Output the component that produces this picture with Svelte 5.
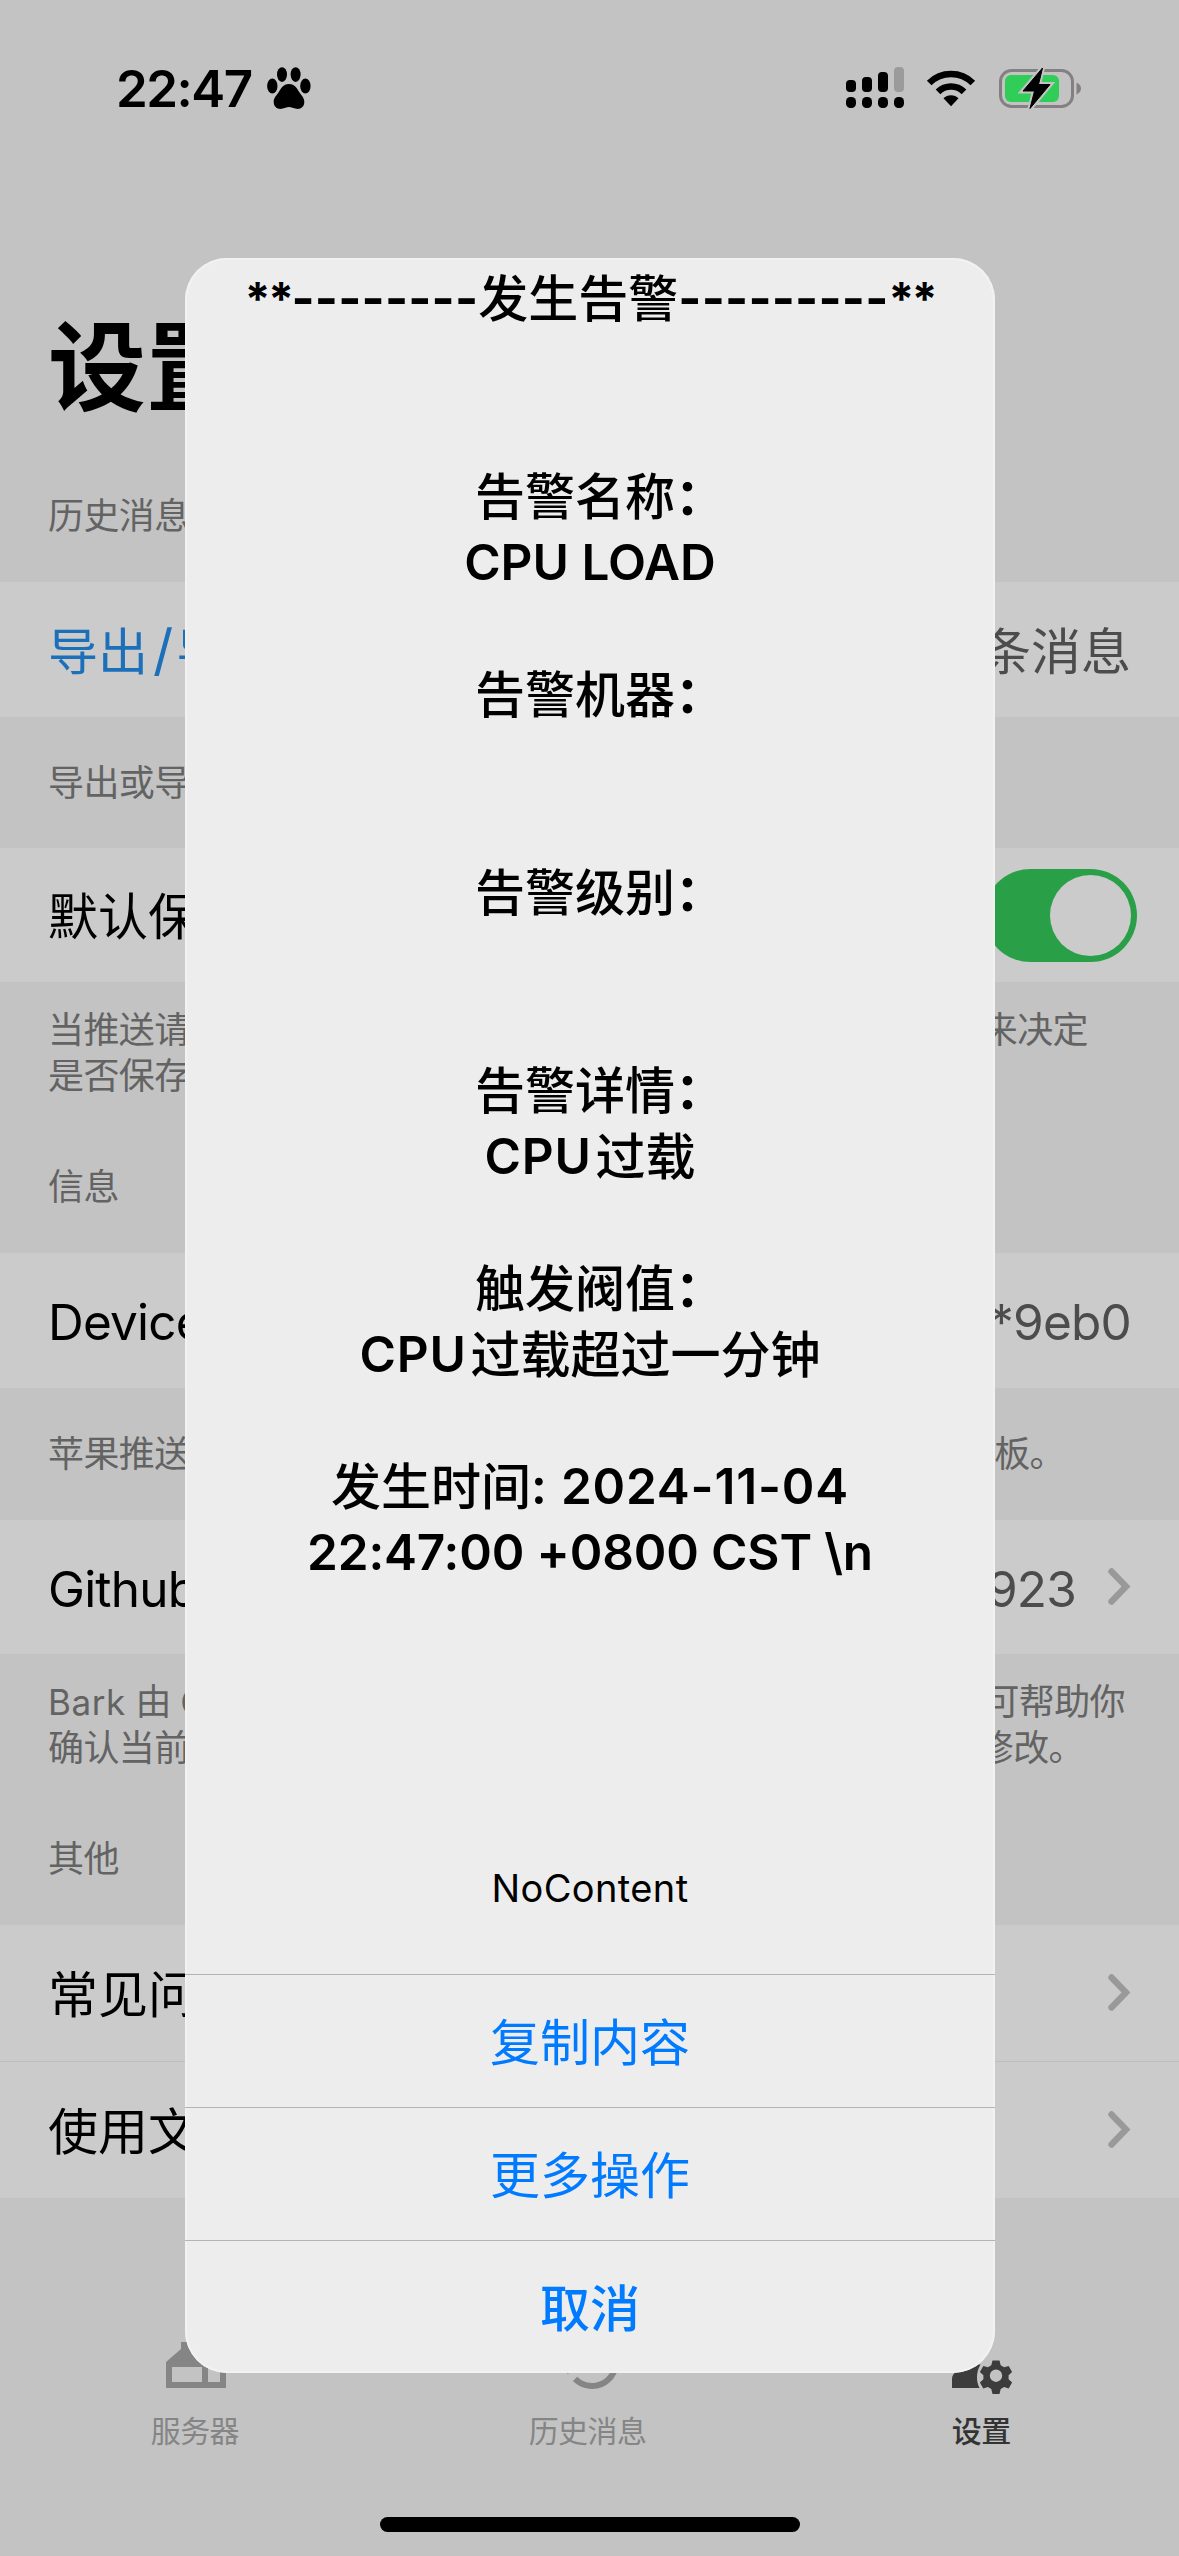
<script>
  const lines = [
    [['**', 's'], ['--------', 'd'], ['发生告警', 'han'], ['---------', 'd'], ['**', 's']],
    [],
    [],
    [['告警名称', 'han'], ['：', 'k']],
    [['CPU LOAD', 'l']],
    [],
    [['告警机器', 'han'], ['：', 'k']],
    [],
    [],
    [['告警级别', 'han'], ['：', 'k']],
    [],
    [],
    [['告警详情', 'han'], ['：', 'k']],
    [['CPU', 'l g'], ['过载', 'han']],
    [],
    [['触发阀值', 'han'], ['：', 'k']],
    [['CPU', 'l g'], ['过载超过一分钟', 'han']],
    [],
    [['发生时间', 'han'], [': 2024-11-04', 'l w']],
    [['22:47:00 +0800 CST \\n', 'l t']]
  ];
  const actions = ['复制内容', '更多操作', '取消'];
</script>

{#snippet chevron()}
  <svg class="chev" viewBox="0 0 24 40"><path d="M4.5 4.500 19 19.500 4.500 34.500" /></svg>
{/snippet}

<div class="screen">
  <header class="status">
    <span class="time">22:47</span>
    <svg class="paw" viewBox="0 0 44 42">
      <ellipse cx="15" cy="7.6" rx="5" ry="7.4" /><ellipse cx="28.6" cy="7.6" rx="5" ry="7.4" />
      <ellipse cx="5.3" cy="19" rx="5.2" ry="7.4" /><ellipse cx="38.4" cy="19" rx="5.2" ry="7.4" />
      <path d="M22 17c6 0 8 4.500 10.500 8.500 2.500 3.500 4.800 5.500 4.800 9.500 0 5-4 7.500-8 6.800-3-.6-4.800-1.800-7.300-1.800s-4.300 1.200-7.300 1.800c-4 .7-8-1.800-8-6.800 0-4 2.300-6 4.800-9.500C14 21.500 16 17 22 17z" />
    </svg>
    <span class="fill"></span>
    <svg class="signal" viewBox="0 0 58 42">
      <rect x="0" y="13" width="10" height="12" rx="4" /><rect x="16" y="10" width="10" height="15" rx="4" />
      <rect x="32" y="5" width="10" height="20" rx="4" /><rect x="48" y="0" width="10" height="25" rx="4" fill="#9b9b9b" />
      <rect x="0" y="30" width="10" height="11" rx="4.500" /><rect x="16" y="30" width="10" height="11" rx="4.500" />
      <rect x="32" y="30" width="10" height="11" rx="4.500" /><rect x="48" y="30" width="10" height="11" rx="4.500" />
    </svg>
    <svg class="wifi" viewBox="0 0 50 38">
      <path d="M3.200 14a31 31 0 0 1 43.600 0M12 22.800a18.600 18.600 0 0 1 26 0" fill="none" stroke="#000" stroke-width="6.600" />
      <path d="M17.500 29.300a10.600 10.600 0 0 1 15 0L25 37.200z" />
    </svg>
    <svg class="battery" viewBox="0 0 84 44">
      <rect x="1.500" y="4.500" width="72" height="36" rx="11" fill="none" stroke="#848082" stroke-width="3" />
      <rect x="6" y="9" width="54" height="27" rx="6" fill="#30cd58" />
      <path d="M77.500 16.500c3 1.300 4.500 3.500 4.500 6s-1.500 4.700-4.500 6z" fill="#848082" />
      <path d="M43.500 2 24 25h11.500L31 42.500 51 18.500H39.500z" stroke="#c3c3c3" stroke-width="5" />
      <path d="M43.500 2 24 25h11.500L31 42.500 51 18.500H39.500z" stroke="#000" stroke-width="1" />
    </svg>
  </header>

  <h1>设置</h1>

  <main>
    <div class="label">历史消息</div>
    <div class="row r1"><span class="link">导出<span class="slash">/</span>导入</span><span class="value">条消息</span></div>
    <div class="note one"><span>导出或导入</span></div>
    <div class="row r2"><span>默认保存</span><span class="switch"><i></i></span></div>
    <div class="note two">
      <div class="cut save"><span>当推送请求</span><span>来决定</span></div>
      <div>是否保存消</div>
    </div>
    <div class="label">信息</div>
    <div class="row r1 lat"><span>Device Token</span><span class="value">**9eb0</span></div>
    <div class="note"><div class="cut push"><span>苹果推送设</span><span>板。</span></div></div>
    <div class="row r2 lat"><span>Github</span><span class="value">f923</span>{@render chevron()}</div>
    <div class="note two">
      <div class="cut build"><span><b>Bark</b> 由 <b>G</b></span><span>可帮助你</span></div>
      <div class="cut verify"><span>确认当前版</span><span>修改。</span></div>
    </div>
    <div class="label">其他</div>
    <div class="row r3"><span>常见问题</span>{@render chevron()}</div>
    <div class="row r3 sep"><span>使用文档</span>{@render chevron()}</div>
  </main>

  <nav>
    <div class="tab">
      <svg class="home" viewBox="0 0 72 72">
        <path fill-rule="evenodd" d="M6 62V36L21 23V16h6l6 6V12h33v50zm6-6h30V41H12zm36 0h12V41H48z" />
      </svg>
      <span>服务器</span>
    </div>
    <div class="tab">
      <svg class="hist" viewBox="0 0 24 24"><path d="M13 3c-4.970 0-9 4.030-9 9H1l3.890 3.890.07.14L9 12H6c0-3.870 3.130-7 7-7s7 3.130 7 7-3.130 7-7 7c-1.930 0-3.680-.79-4.940-2.060l-1.420 1.420C8.270 19.990 10.510 21 13 21c4.970 0 9-4.030 9-9s-4.030-9-9-9z" /></svg>
      <span>历史消息</span>
    </div>
    <div class="tab on">
      <svg class="user" viewBox="0 0 72 72">
        <circle cx="28" cy="20" r="12" />
        <path d="M6 62V53c0-3 1.500-6 5-8 6-4 13-6.500 21-6.500h2.500C30 46 30 55 33.500 62z" />
        <path fill-rule="evenodd" d="M46.500 34.500h7l1.200 4.800 3.400 2 4.600-1.400 3.400 6-3.500 3.300v4l3.500 3.300-3.400 6-4.600-1.400-3.400 2-1.200 4.800h-7l-1.200-4.800-3.400-2-4.600 1.400-3.400-6 3.500-3.300v-4l-3.500-3.300 3.400-6 4.600 1.400 3.400-2zM50 43.500a6.200 6.200 0 1 0 0 12.400 6.200 6.200 0 0 0 0-12.400z" />
      </svg>
      <span>设置</span>
    </div>
  </nav>
  <div class="indicator"></div>

  <div class="alert" role="alertdialog" aria-label="告警">
    <div class="body">
      <div class="title">
        {#each lines as line}
          <div class="line">{#each line as [text, kind]}<span class={kind}>{text}</span>{/each}</div>
        {/each}
      </div>
      <div class="message">NoContent</div>
    </div>
    {#each actions as action, i}
      <button class:bold={i === 2}>{action}</button>
    {/each}
  </div>
</div>

<style>
  :global(body) { margin: 0; background: #c3c3c3; }
  .screen {
    position: relative; width: 1179px; height: 2556px; overflow: hidden;
    display: flex; flex-direction: column; box-sizing: border-box;
    background: #c3c3c3; color: #000; font-family: Inter, "Noto Sans CJK SC", sans-serif;
  }
  .status { display: flex; align-items: center; height: 176px; flex: none; padding: 0 98px 0 116px; box-sizing: border-box; }
  .time { font-size: 51px; font-weight: 600; letter-spacing: -1.5px; width: 151px; white-space: nowrap; }
  .paw { width: 44px; height: 42px; }
  .fill { flex: 1; }
  .signal { width: 58px; height: 42px; margin-right: 22px; }
  .wifi { width: 50px; height: 38px; margin-right: 23px; }
  .battery { width: 84px; height: 44px; margin-right: -2px; }
  h1 {
    margin: 115px 0 5px; padding-left: 48px; height: 154px; line-height: 154px; flex: none;
    font-size: 98px; font-weight: 700;
  }
  .label, .note { padding: 0 48px; font-size: 36px; letter-spacing: -0.6px; color: #636363; white-space: nowrap; }
  .label { height: 132px; line-height: 133px; }
  .note { height: 132px; line-height: 133px; }
  .note.one { height: 131px; line-height: 133px; }
  .note.two { height: 114px; padding-top: 25px; line-height: 46px; }
  .note b { font-weight: 400; font-size: 35px; letter-spacing: 0.6px; }
  .cut { display: flex; justify-content: space-between; }
  .save { margin-right: 43px; }
  .push { margin-right: 66px; }
  .build { margin-right: 6px; }
  .verify { margin-right: 47px; }
  .row {
    display: flex; align-items: center; padding: 0 48px; box-sizing: border-box;
    background: #cbcbcb; font-size: 50px; white-space: nowrap;
  }
  .row > span:not(.switch) { margin-top: -4px; }
  .row.lat > span { margin-top: 3px; }
  .r1 { height: 135px; }
  .r2 { height: 134px; }
  .r3 { height: 136px; }
  .sep { height: 137px; border-top: 1px solid #bdbdbd; }
  .lat { font-size: 49.5px; letter-spacing: -0.8px; }
  .row > span:first-child { flex: 1; }
  .value { color: #4c4c4c; }
  .link { color: #1c6fb9; }
  .slash { margin: 0 3px 0 5px; font-size: 56px; line-height: 50px; }
  .chev { width: 24px; height: 40px; margin: 0 0 0 31px; }
  .chev path { fill: none; stroke: #999; stroke-width: 6.4; stroke-linecap: round; stroke-linejoin: miter; }
  .switch {
    width: 153px; height: 93px; border-radius: 47px; background: #29a048; margin-right: -6px;
    display: flex; justify-content: flex-end; align-items: center; padding-right: 6px; box-sizing: border-box;
  }
  .switch i { width: 81px; height: 81px; border-radius: 50%; background: #cbcbcb; }
  nav { display: flex; margin-top: 128px; margin-right: 1px; }
  .tab { flex: 1; display: flex; flex-direction: column; align-items: center; color: #858585; font-size: 30px; letter-spacing: -0.6px; }
  .tab span { line-height: 44px; margin-top: 11px; margin-right: 3px; }
  .tab svg { fill: #858585; height: 72px; width: 72px; }
  .tab.on { color: #333; font-weight: 500; }
  .tab.on span { margin-right: 1px; }
  .tab.on svg { fill: #3c3c3c; }
  .indicator { width: 420px; height: 15px; border-radius: 8px; background: #000; margin: auto auto 24px; }
  .alert {
    position: absolute; left: 185px; top: 258px; width: 810px; height: 2115px; border-radius: 42px;
    overflow: hidden; background: #ededed; display: flex; flex-direction: column; box-shadow: inset 0 0 0 2px #f2f2f2;
  }
  .body { flex: 1; }
  .title { padding-top: 7px; }
  .line { height: 66px; display: flex; justify-content: center; align-items: center; white-space: pre; font-size: 50px; line-height: 66px; font-weight: 500; }
  .han, .k { padding-top: 2px; }
  .l { font-weight: 600; font-size: 49.5px; }
  .d { font-weight: 700; font-size: 49.5px; letter-spacing: 0.2px; }
  .s { font-weight: 700; font-size: 46px; letter-spacing: -2.4px; padding-top: 2px; }
  .g { margin-right: 4px; letter-spacing: 0.8px; }
  .w { letter-spacing: 0.8px; }
  .t { letter-spacing: -0.15px; }
  .k { font-weight: 700; margin-right: -20px; }
  .message { margin-top: 279px; text-align: center; font-size: 38px; line-height: 48px; letter-spacing: 0.4px; }
  button {
    height: 133px; border: 0; border-top: 1px solid #b4b4b4; background: none; padding: 0 0 4px;
    font: 400 50px Inter, "Noto Sans CJK SC", sans-serif; color: #007aff;
  }
  button.bold { font-weight: 500; }
</style>
